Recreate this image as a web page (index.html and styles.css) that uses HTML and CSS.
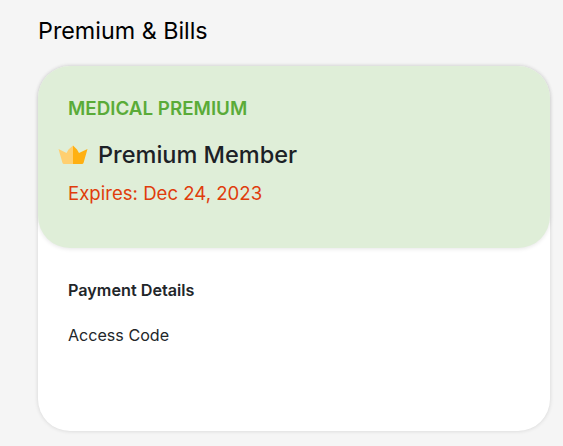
FILE: index.html
```html
<!DOCTYPE html>
<html lang="en">
<head>
<meta charset="utf-8">
<title>Premium &amp; Bills</title>
<link rel="stylesheet" href="styles.css">
</head>
<body>
<main class="page">
  <h1 class="title">Premium &amp; Bills</h1>
  <section class="card">
    <div class="plan">
      <div class="plan-label">MEDICAL PREMIUM</div>
      <div class="member">
        <svg class="crown" width="30" height="20" viewBox="0 0 30 20" aria-hidden="true">
          <path d="M15 0.5 L10.5 4.5 L8.5 8 L0.5 4 L4.5 18 Q4.8 19 6 19 L15 19 Z" fill="#ffcf70"/>
          <path d="M15 0.5 L19 4.5 L21 8 L29.5 4 L25.5 18 Q25.2 19 24 19 L15 19 Z" fill="#ffb012"/>
        </svg>
        <span class="member-name">Premium Member</span>
      </div>
      <div class="expires">Expires: Dec 24, 2023</div>
    </div>
    <div class="details">
      <div class="details-title">Payment Details</div>
      <div class="details-row">Access Code</div>
    </div>
  </section>
</main>
</body>
</html>
```
FILE: styles.css
```css
* { box-sizing: border-box; }
html, body { margin: 0; height: 100%; }
body {
  background: #f5f5f5;
  font-family: "Inter", "Liberation Sans", sans-serif;
  overflow: hidden;
}
.page { width: 563px; height: 446px; padding: 18px 13px 0 38px; }
.title {
  margin: 0;
  height: 48px;
  font-size: 23.3px;
  line-height: 26px;
  font-weight: 400;
  color: #000;
}
.card {
  width: 512px;
  height: 365px;
  background: #fff;
  border-radius: 32px;
  box-shadow: 0 0 4px rgba(0, 0, 0, 0.14);
}
.plan {
  height: 182px;
  padding: 32px 30px 0;
  background: #dfeed8;
  border-radius: 32px;
  box-shadow: 0 1px 4px rgba(0, 0, 0, 0.1);
}
.plan-label {
  font-size: 18.8px;
  line-height: 22px;
  font-weight: 600;
  color: #5aab38;
}
.member {
  display: flex;
  align-items: center;
  gap: 10px;
  margin: 19px 0 0 -10px;
  height: 32px;
}
.crown { flex: none; }
.member-name {
  font-size: 23.5px;
  line-height: 28px;
  font-weight: 500;
  color: #1c2126;
}
.expires {
  margin-top: 10px;
  font-size: 18.6px;
  line-height: 24px;
  color: #e03c0c;
}
.details { padding: 32px 30px 0; }
.details-title {
  font-size: 16.2px;
  line-height: 20px;
  font-weight: 600;
  color: #22262a;
}
.details-row {
  margin-top: 25px;
  font-size: 16.1px;
  line-height: 20px;
  color: #22262a;
}
```
